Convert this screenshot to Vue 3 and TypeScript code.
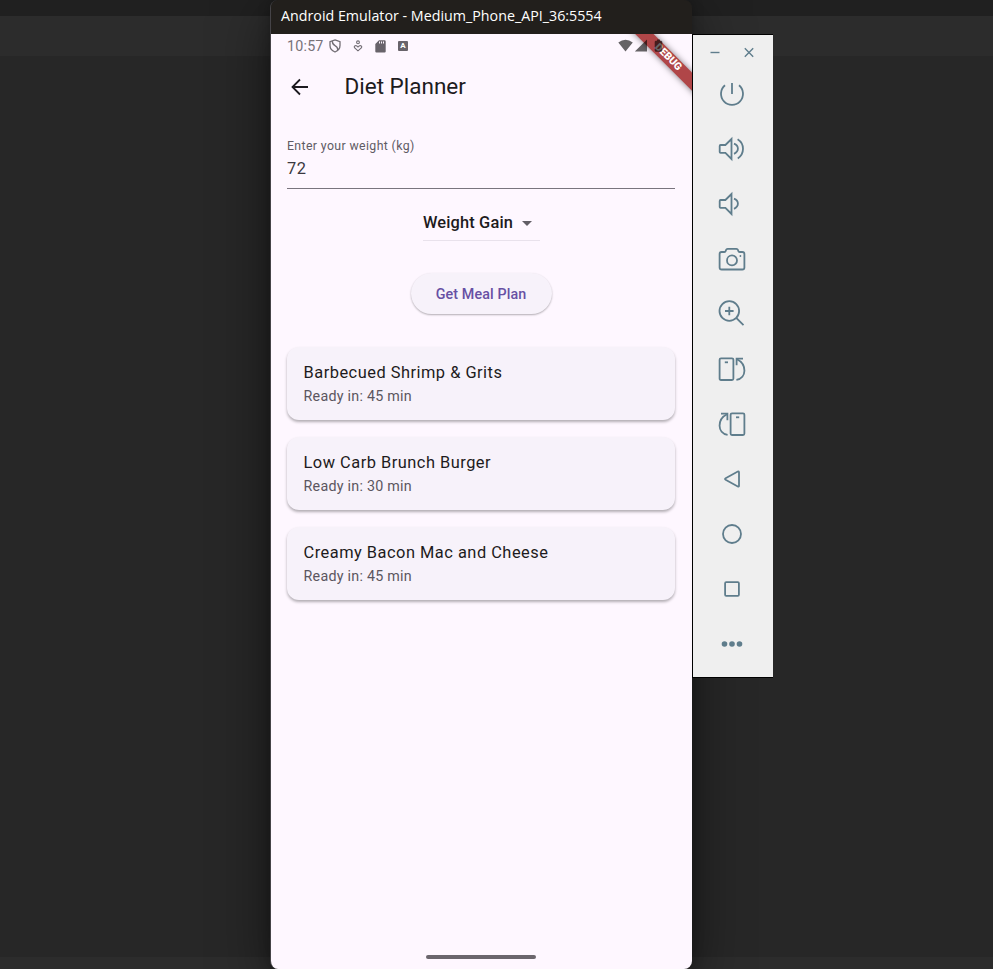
<script setup lang="ts">
import { ref } from 'vue'

interface Meal {
  title: string
  minutes: number
}

interface Tool {
  name: string
  paths: string[]
  dots?: [number, number, number][]
}

const weight = ref('72')
const goal = ref('Weight Gain')

const meals: Meal[] = [
  { title: 'Barbecued Shrimp & Grits', minutes: 45 },
  { title: 'Low Carb Brunch Burger', minutes: 30 },
  { title: 'Creamy Bacon Mac and Cheese', minutes: 45 },
]

const speaker = 'M4.6 12H9.4L15.5 6V26L9.4 19.8H4.6Q3.7 19.8 3.7 18.9V12.9Q3.7 12 4.6 12Z'
const innerWave = 'M18 10.6Q21.9 12 21.9 15.6T18 20.8'

const tools: Tool[] = [
  { name: 'power', paths: ['M9 7.3A11 11 0 1 0 23 7.3', 'M16 5V16'] },
  { name: 'volume-up', paths: [speaker, innerWave, 'M21.6 6.2Q27 9.6 27 15.8T21.8 25.4'] },
  { name: 'volume-down', paths: [speaker, innerWave] },
  {
    name: 'camera',
    paths: [
      'M5.5 9H8.4Q9.4 9 9.7 7.9L10 7Q10.4 5.8 11.6 5.8H20.4Q21.6 5.8 22 7L22.3 7.9Q22.6 9 23.6 9H26.3Q28.4 9 28.4 11V24.4Q28.4 26.5 26.3 26.5H5.7Q3.6 26.5 3.6 24.4V11Q3.6 9 5.5 9Z',
      'M21 17.4A5 5 0 1 1 11 17.4A5 5 0 1 1 21 17.4Z',
    ],
    dots: [[24.4, 13, 0.9]],
  },
  { name: 'zoom', paths: ['M23.1 13A9.8 9.8 0 1 1 3.5 13A9.8 9.8 0 1 1 23.1 13Z', 'M9 13H17.6M13.3 8.7V17.3', 'M20.2 19.8L27.5 27.2'] },
  {
    name: 'rotate-left',
    paths: [
      'M5 5.4H16Q17.4 5.4 17.4 6.8V25.6Q17.4 27 16 27H5Q3.6 27 3.6 25.6V6.8Q3.6 5.4 5 5.4Z',
      'M8.8 9.3H12',
      'M27 5.7H20.6V12.2',
      'M21 6.2C31 11 31 25.4 20.4 26.8',
    ],
  },
  {
    name: 'rotate-right',
    paths: [
      'M16 5.4H27Q28.4 5.4 28.4 6.8V25.6Q28.4 27 27 27H16Q14.6 27 14.6 25.6V6.8Q14.6 5.4 16 5.4Z',
      'M20 9.3H23.2',
      'M5 5.7H11.4V12.2',
      'M11 6.2C1 11 1 25.4 11.6 26.8',
    ],
  },
  { name: 'back', paths: ['M9.6 15.2L21.8 8.5Q23 8 23 9.3V22.7Q23 24 21.8 23.5L9.6 16.8Q8.4 16 9.6 15.2Z'] },
  { name: 'home', paths: ['M25 16A9 9 0 1 1 7 16A9 9 0 1 1 25 16Z'] },
  { name: 'overview', paths: ['M10.2 9.1H21.8Q22.9 9.1 22.9 10.2V21.8Q22.9 22.9 21.8 22.9H10.2Q9.1 22.9 9.1 21.8V10.2Q9.1 9.1 10.2 9.1Z'] },
  { name: 'more', paths: [], dots: [[8.5, 16, 2.8], [16, 16, 2.8], [23.5, 16, 2.8]] },
]
</script>

<template>
  <main class="desktop">
    <section class="window">
      <header class="titlebar"><span>Android Emulator - Medium_Phone_API_36:5554</span></header>

      <div class="screen">
        <div class="banner-clip"><div class="banner">DEBUG</div></div>

        <div class="status">
          <span class="clock">10:57</span>
          <svg class="shield" width="12" height="14" viewBox="0 0 12 14">
            <path d="M6 .9L11 2.7V6.5Q11 11 6 13Q1 11 1 6.5V2.7Z M3.4 2.2Q3.2 5.2 6 6.6T8.8 11.2" />
          </svg>
          <svg class="person" width="10" height="12" viewBox="0 0 10 12">
            <path d="M6.4 2.3A1.4 1.4 0 1 1 3.6 2.3A1.4 1.4 0 1 1 6.4 2.3Z M5 10.8L1.7 8Q.6 6.4 2.2 5.7Q3.7 5.3 5 7Q6.3 5.3 7.8 5.7Q9.4 6.4 8.3 8Z" />
          </svg>
          <svg class="sd" width="11" height="13" viewBox="0 0 11 13">
            <path fill-rule="evenodd" d="M4 .3H9.6Q10.7.3 10.7 1.4V11.5Q10.7 12.6 9.6 12.6H1.4Q.3 12.6.3 11.5V4ZM4 1.6V3.4H5V1.6ZM6 1.6V3.4H7V1.6ZM8 1.6V3.4H9V1.6Z" />
          </svg>
          <span class="keyboard">A</span>
          <svg class="signals" width="46" height="14" viewBox="0 0 46 14">
            <path d="M.3 3.6Q7.5-2 14.8 3.6L7.5 12.6Z M29 .6V12.6H16.8Z M38 1.8H39V.4H42V1.8H43Q44.3 1.8 44.3 3V11.6Q44.3 12.8 43 12.8H38Q36.7 12.8 36.7 11.6V3Q36.7 1.8 38 1.8Z" />
          </svg>
        </div>

        <div class="appbar">
          <svg width="18" height="18" viewBox="0 0 18 18"><path d="M17 9H2M9 1.5L1.5 9L9 16.5" /></svg>
          <h1>Diet Planner</h1>
        </div>

        <div class="body">
          <div class="field">
            <span class="label">Enter your weight (kg)</span>
            <span class="value">{{ weight }}</span>
          </div>

          <div class="dropdown">
            <span>{{ goal }}</span>
            <svg width="10" height="5" viewBox="0 0 10 5"><path d="M0 0H10L5 5Z" /></svg>
          </div>

          <button class="submit" type="button">Get Meal Plan</button>

          <ul class="meals">
            <li v-for="meal in meals" :key="meal.title">
              <span class="meal-title">{{ meal.title }}</span>
              <span class="meal-time">Ready in: {{ meal.minutes }} min</span>
            </li>
          </ul>
        </div>

        <div class="handle"></div>
      </div>
    </section>

    <aside class="toolbar">
      <div class="controls">
        <svg width="10" height="12" viewBox="0 0 10 12"><path d="M.5 6.5H9.5" /></svg>
        <svg width="10" height="12" viewBox="0 0 10 12"><path d="M.8 2.3L9.2 10.7M9.2 2.3L.8 10.7" /></svg>
      </div>
      <svg v-for="tool in tools" :key="tool.name" class="tool" width="32" height="32" viewBox="0 0 32 32">
        <path v-for="d in tool.paths" :key="d" :d="d" />
        <circle v-for="(dot, i) in tool.dots ?? []" :key="i" :cx="dot[0]" :cy="dot[1]" :r="dot[2]" />
      </svg>
    </aside>
  </main>
</template>

<style>
body {
  margin: 0;
  overflow: hidden;
}
</style>

<style scoped>
.desktop {
  display: flex;
  align-items: flex-start;
  box-sizing: border-box;
  width: 993px;
  height: 969px;
  padding-left: 270px;
  overflow: hidden;
  font-family: Roboto, sans-serif;
  background: linear-gradient(#202020 0 16px, #2c2c2c 16px 56px, #272727 56px 957px, #2c2c2c 957px);
}
.window {
  box-sizing: border-box;
  flex: none;
  width: 422px;
  height: 969px;
  border-left: 1px solid #454347;
  border-radius: 8px;
  overflow: hidden;
  box-shadow: 0 14px 55px rgba(0, 0, 0, 0.5), 0 0 12px rgba(0, 0, 0, 0.25);
}
.titlebar {
  display: flex;
  align-items: center;
  box-sizing: border-box;
  height: 34px;
  padding: 0 0 3px 10px;
  background: #221f1c;
  color: #fff;
  font: 14.27px/20px "Open Sans", sans-serif;
  white-space: nowrap;
}
.screen {
  position: relative;
  display: flex;
  flex-direction: column;
  height: 935px;
  background: #fef7ff;
}
.banner-clip {
  position: absolute;
  top: 0;
  right: 0;
  width: 80px;
  height: 80px;
  overflow: hidden;
}
.banner {
  position: absolute;
  left: 5.5px;
  top: 17px;
  width: 100px;
  height: 12.5px;
  transform: rotate(45deg);
  background: #b04648;
  box-shadow: 0 0 6px rgba(0, 0, 0, 0.5);
  color: #fff;
  font-size: 10.4px;
  font-weight: 900;
  line-height: 12.5px;
  text-align: center;
}
.status {
  position: relative;
  display: flex;
  align-items: center;
  height: 24px;
  padding-left: 16px;
}
.status svg {
  fill: #68636a;
}
.clock {
  width: 42px;
  color: #777279;
  font-size: 14.3px;
  letter-spacing: 0.2px;
}
.status .shield,
.status .person {
  fill: none;
  stroke: #716c73;
  stroke-width: 1.3;
}
.status .person {
  margin-left: 12px;
  stroke-width: 1.1;
}
.sd {
  margin-left: 12px;
}
.keyboard {
  width: 10px;
  height: 10px;
  margin-left: 12px;
  border-radius: 1px;
  background: #68636a;
  color: #fff;
  font-size: 8px;
  font-weight: 700;
  line-height: 10px;
  text-align: center;
}
.status .signals {
  margin-left: 210px;
  margin-top: -1px;
  fill: rgba(0, 0, 0, 0.6);
}
.appbar {
  display: flex;
  align-items: center;
  height: 57px;
  padding: 0 0 1px 20px;
  box-sizing: border-box;
}
.appbar svg {
  margin-top: 1px;
  fill: none;
  stroke: #1d1b20;
  stroke-width: 1.8;
}
.appbar h1 {
  margin: 0 0 1px 35.5px;
  color: #1d1b20;
  font-size: 22.5px;
  font-weight: 400;
  line-height: 28px;
}
.body {
  display: flex;
  flex: 1;
  flex-direction: column;
  align-items: center;
  padding: 16px 17px 0 16px;
}
.field {
  display: flex;
  flex-direction: column;
  box-sizing: border-box;
  width: 388px;
  height: 58px;
  padding-top: 7px;
  border-bottom: 1px solid #79747e;
}
.label {
  color: #605b64;
  font-size: 12.3px;
  line-height: 16px;
  letter-spacing: 0.38px;
}
.value {
  margin-top: 3px;
  color: #3b3840;
  font-size: 16.4px;
  line-height: 24px;
  letter-spacing: 0.5px;
}
.dropdown {
  display: flex;
  align-items: center;
  box-sizing: border-box;
  width: 117px;
  height: 35px;
  margin-top: 17px;
  padding-left: 0.5px;
  border-bottom: 1px solid #e9e2ec;
  color: #1d1b20;
  font-size: 16.4px;
  font-weight: 500;
  letter-spacing: 0.15px;
  line-height: 20px;
  white-space: nowrap;
}
.dropdown span {
  margin-bottom: 1px;
}
.dropdown svg {
  margin: 1px 0 0 9px;
  fill: #625e66;
}
.submit {
  width: 141px;
  height: 41px;
  margin-top: 32px;
  padding: 0;
  border: 0;
  border-radius: 21px;
  background: #f7f2fa;
  box-shadow: 0 1px 2px rgba(0, 0, 0, 0.3);
  color: #6750a4;
  font: 500 14.3px Roboto, sans-serif;
  letter-spacing: 0.1px;
}
.meals {
  display: flex;
  flex-direction: column;
  gap: 17px;
  width: 388px;
  margin: 33px 0 0;
  padding: 0;
  list-style: none;
}
.meals li {
  display: flex;
  flex-direction: column;
  box-sizing: border-box;
  height: 73px;
  padding: 13px 16.5px;
  border-radius: 12px;
  background: #f7f2fa;
  box-shadow: 0 2px 3px rgba(0, 0, 0, 0.3);
}
.meal-title {
  color: #1d1b20;
  font-size: 16.4px;
  line-height: 25px;
  letter-spacing: 0.5px;
}
.meal-time {
  margin-top: 1px;
  color: #5b565f;
  font-size: 14.3px;
  line-height: 21px;
  letter-spacing: 0.25px;
}
.handle {
  align-self: center;
  width: 110px;
  height: 4px;
  margin: 0 1px 10px 0;
  border-radius: 2px;
  background: #6b666d;
}
.toolbar {
  z-index: 1;
  display: flex;
  flex: none;
  flex-direction: column;
  align-items: center;
  box-sizing: border-box;
  width: 81px;
  height: 644px;
  margin-top: 34px;
  padding-right: 2px;
  border: solid #000;
  border-width: 1px 0 1px 1px;
  background: #efefef;
}
.toolbar svg {
  display: block;
  fill: none;
  stroke: #5f7d8c;
  stroke-width: 1.8;
}
.toolbar .controls svg {
  stroke-width: 1.4;
}
.controls {
  display: flex;
  gap: 24px;
  margin: 11px 0 20px;
}
.tool {
  flex: none;
  margin-bottom: 23px;
}
.tool circle {
  fill: #5f7d8c;
  stroke: none;
}
</style>
